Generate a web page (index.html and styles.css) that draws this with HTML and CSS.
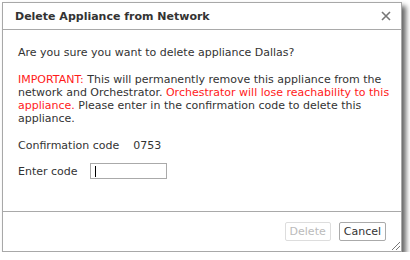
FILE: index.html
```html
<!DOCTYPE html>
<html>
<head>
<meta charset="utf-8">
<link rel="stylesheet" href="styles.css">
</head>
<body>
<div class="dialog">
  <div class="header">
    <span class="title">Delete Appliance from Network</span>
    <svg class="close" width="10" height="10" viewBox="0 0 10 10"><path d="M1 1 L9 9 M9 1 L1 9" stroke="#777" stroke-width="1.6" fill="none"/></svg>
  </div>
  <div class="content">
    <p class="q">Are you sure you want to delete appliance Dallas?</p>
    <p class="warn"><span class="red">IMPORTANT:</span> This will permanently remove this appliance from the network and Orchestrator. <span class="red">Orchestrator will lose reachability to this appliance.</span> Please enter in the confirmation code to delete this appliance.</p>
    <div class="row code"><span class="label">Confirmation code</span><span>0753</span></div>
    <div class="row entry"><span class="label2">Enter code</span><span class="input"><span class="caret"></span></span></div>
  </div>
  <div class="footer">
    <button class="btn disabled">Delete</button>
    <button class="btn">Cancel</button>
    <span class="grip"></span>
  </div>
</div>
</body>
</html>
```
FILE: styles.css
```css
html, body { margin: 0; padding: 0; background: #fff; }
body { font-family: "DejaVu Sans", Verdana, sans-serif; font-size: 11px; color: #333; }
.dialog {
  position: relative;
  margin: 2px 0 0 2px;
  width: 398px;
  height: 248px;
  border: 1px solid #a8a8a8;
  background: #fff;
  box-shadow: 4px 4px 5px rgba(0,0,0,0.6);
  display: flex;
  flex-direction: column;
}
.header {
  height: 26px;
  border-bottom: 1px solid #a9a9a9;
  display: flex;
  align-items: center;
  justify-content: space-between;
  padding: 0 10px 0 12px;
}
.title { font-weight: bold; font-size: 11px; color: #333; }
.close { display: block; }
.content { flex: 1; padding: 16px 8px 0 15px; line-height: 13px; }
.content p { margin: 0 0 14px 0; }
.content p.warn { margin-bottom: 0; }
.red { color: #ff1a1a; }
.row { display: flex; align-items: center; }
.code { margin-top: 13px; height: 14px; }
.label { margin-right: 14px; }
.label2 { margin-right: 12px; }
.entry { margin-top: 11px; }
.input { width: 71px; height: 14px; border: 1px solid #aaa; display: flex; align-items: center; padding-left: 4px; }
.caret { width: 1px; height: 11px; background: #000; }
.footer {
  height: 39px;
  border-top: 1px solid #a9a9a9;
  display: flex;
  align-items: center;
  justify-content: flex-end;
  padding-right: 15px;
  gap: 8px;
  position: relative;
}
.btn {
  font-family: "DejaVu Sans", Verdana, sans-serif;
  font-size: 11px;
  height: 19px;
  padding: 0 4px;
  border: 1px solid #aaa;
  border-radius: 2px;
  background: #fff;
  color: #333;
}
.btn.disabled { color: #bbb; border-color: #ddd; }
.grip {
  position: absolute; right: 1px; bottom: 1px; width: 10px; height: 10px;
  background: repeating-linear-gradient(135deg, transparent 0 2px, #777 2px 3px);
  clip-path: polygon(100% 0, 100% 100%, 0 100%);
}
```
